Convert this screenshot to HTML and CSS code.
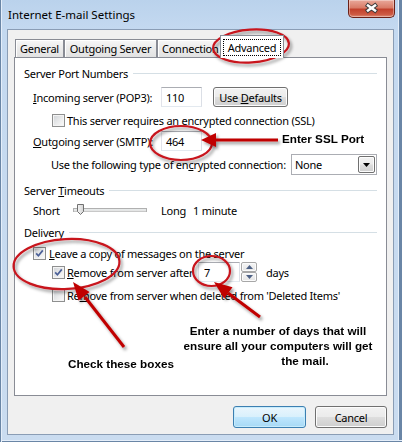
FILE: index.html
```html
<!DOCTYPE html>
<html>
<head>
<meta charset="utf-8">
<title>Internet E-mail Settings</title>
<link rel="stylesheet" href="styles.css">
</head>
<body>
<div class="window">
  <div class="titlebar">
    <span class="title">Internet E-mail Settings</span>
    <div class="close">
      <svg width="47" height="18" viewBox="0 0 47 18">
        <g stroke-linecap="butt">
          <line x1="18" y1="5" x2="29" y2="13" stroke="#3a3a3a" stroke-width="4.6"/>
          <line x1="29" y1="5" x2="18" y2="13" stroke="#3a3a3a" stroke-width="4.6"/>
          <line x1="18.8" y1="5.6" x2="28.2" y2="12.4" stroke="#fff" stroke-width="2.6"/>
          <line x1="28.2" y1="5.6" x2="18.8" y2="12.4" stroke="#fff" stroke-width="2.6"/>
        </g>
      </svg>
    </div>
  </div>

  <div class="client">
    <div class="tabs">
      <div class="tab t-general">General</div>
      <div class="tab t-outgoing">Outgoing Server</div>
      <div class="tab t-connection">Connection</div>
      <div class="tab active"><span class="focus">Advanced</span></div>
    </div>

    <div class="panel">
      <div class="group"><span>Server Port Numbers</span><i class="rule"></i></div>

      <div class="row r-in">
        <span class="lbl"><u>I</u>ncoming server (POP3):</span>
        <span class="field">110</span>
        <span class="btn btn-def"><span>Use <u>D</u>efaults</span></span>
      </div>

      <div class="row r-ssl">
        <span class="cb"></span>
        <span>This server requires an encrypted connection (SSL)</span>
      </div>

      <div class="row r-out">
        <span class="lbl"><u>O</u>utgoing server (SMTP):</span>
        <span class="field">464</span>
      </div>

      <div class="row r-enc">
        <span>Use the following type of en<u>c</u>rypted connection:</span>
        <span class="combo"><span class="combo-val">None</span>
          <span class="combo-btn">
            <svg width="7" height="4" viewBox="0 0 7 4"><polygon points="0,0 7,0 3.5,4" fill="#000"/></svg>
          </span>
        </span>
      </div>

      <div class="group g-mid"><span>Server <u>T</u>imeouts</span><i class="rule"></i></div>

      <div class="row r-slider">
        <span class="s-short">Short</span>
        <svg class="slider" width="74" height="14" viewBox="0 0 74 14">
          <defs>
            <linearGradient id="thumb" x1="0" y1="0" x2="1" y2="0">
              <stop offset="0" stop-color="#f4f4f4"/>
              <stop offset="1" stop-color="#d4d4d4"/>
            </linearGradient>
          </defs>
          <rect x="0.5" y="5.5" width="73" height="3" fill="#e7eaea" stroke="#b0b0b0"/>
          <line x1="1" y1="8" x2="73" y2="8" stroke="#e0e0e0"/>
          <polygon points="4.5,1.5 10.5,1.5 10.5,8.5 7.5,11.5 4.5,8.5" fill="url(#thumb)" stroke="#707070"/>
        </svg>
        <span class="s-long">Long</span>
        <span>1 minute</span>
      </div>

      <div class="group g-mid"><span>Delivery</span><i class="rule"></i></div>

      <div class="row r-leave">
        <span class="cb checked">
          <svg width="11" height="11" viewBox="0 0 11 11"><path d="M2.2 5.4 L4.4 7.8 L8.8 2.4" fill="none" stroke="#4a5f97" stroke-width="1.7"/></svg>
        </span>
        <span><u>L</u>eave a copy of messages on the server</span>
      </div>

      <div class="row r-after">
        <span class="cb checked">
          <svg width="11" height="11" viewBox="0 0 11 11"><path d="M2.2 5.4 L4.4 7.8 L8.8 2.4" fill="none" stroke="#4a5f97" stroke-width="1.7"/></svg>
        </span>
        <span class="after-lbl"><u>R</u>emove from server after</span>
        <span class="field f-days">7</span>
        <span class="spin">
          <span class="spin-btn"><svg width="7" height="4" viewBox="0 0 7 4"><polygon points="0,4 7,4 3.5,0" fill="#4d6185"/></svg></span>
          <span class="spin-btn"><svg width="7" height="4" viewBox="0 0 7 4"><polygon points="0,0 7,0 3.5,4" fill="#4d6185"/></svg></span>
        </span>
        <span class="days">days</span>
      </div>

      <div class="row r-del">
        <span class="cb"></span>
        <span>Re<u>m</u>ove from server when deleted from 'Deleted Items'</span>
      </div>
    </div>

    <div class="buttons">
      <span class="btn btn-ok">OK</span>
      <span class="btn btn-cancel">Cancel</span>
    </div>
  </div>

  <svg class="marks" width="402" height="442" viewBox="0 0 402 442">
    <defs>
      <filter id="sh" x="-30%" y="-30%" width="160%" height="160%">
        <feDropShadow dx="2" dy="2.5" stdDeviation="1.6" flood-color="#000" flood-opacity="0.4"/>
      </filter>
    </defs>
    <g fill="none" stroke="#c8141e" stroke-width="2.2" filter="url(#sh)">
      <ellipse cx="251" cy="46" rx="38" ry="16.5" transform="rotate(-4 251 46)"/>
      <ellipse cx="181" cy="143" rx="31" ry="17"/>
      <ellipse cx="66.5" cy="264" rx="53" ry="25" transform="rotate(-3 66.5 264)"/>
      <ellipse cx="211.5" cy="271" rx="18.5" ry="15"/>
    </g>
    <g filter="url(#sh)">
      <line x1="278" y1="140" x2="214" y2="140" stroke="#c00000" stroke-width="3"/>
      <polygon points="201,140 216,133 216,147" fill="#c00000"/>
      <line x1="124" y1="347" x2="85" y2="297" stroke="#c00000" stroke-width="3"/>
      <polygon points="73,282 89.6,291.9 78.6,300.5" fill="#c00000"/>
      <line x1="260" y1="317" x2="228" y2="293" stroke="#c00000" stroke-width="3"/>
      <polygon points="214,282 232.5,287.3 224.1,298.5" fill="#c00000"/>
    </g>
  </svg>

  <div class="note note-ssl">Enter SSL Port</div>
  <div class="note note-days">
    <div>Enter a number of days that will</div>
    <div>ensure all your computers will get</div>
    <div class="last">the mail.</div>
  </div>
  <div class="note note-check">Check these boxes</div>
</div>
</body>
</html>
```

FILE: styles.css
```css
* { box-sizing: border-box; }
html, body { margin: 0; padding: 0; }
body {
  width: 402px;
  height: 442px;
  overflow: hidden;
  background: #fff;
  font-family: "Noto Sans", "Open Sans", sans-serif;
  font-size: 11px;
  letter-spacing: -0.25px;
  color: #000;
}
u { text-decoration: underline; text-underline-offset: 1px; }

.window {
  position: relative;
  width: 402px;
  height: 442px;
  display: flex;
  flex-direction: column;
  background: linear-gradient(180deg, #bad2ec 0px, #c4d9f0 30px, #cadcf0 100%);
  box-shadow: inset 1px 0 0 #6a86a6, inset 2px 0 0 #e4eefa, inset 0 -1px 0 #6a86a6, inset 0 -2px 0 #e4eefa, inset -3px 0 0 #6a86a6, inset -4px 0 0 #e4eefa;
}

.titlebar {
  height: 29px;
  display: flex;
  align-items: flex-start;
  flex: none;
}
.title {
  font-size: 11.5px;
  letter-spacing: 0;
  line-height: 30px;
  padding-left: 8px;
}
.close {
  margin-left: auto;
  margin-right: 7px;
  width: 47px;
  height: 18px;
  border: 1px solid #6b2118;
  border-top: none;
  border-radius: 0 0 5px 5px;
  background: linear-gradient(180deg, #e9a89a 0%, #d97c68 45%, #c2412c 55%, #cd5a43 85%, #dd8d78 100%);
  box-shadow: inset 0 0 0 1px rgba(255,255,255,0.35);
  display: flex;
}
.close svg { display: block; margin-top: -1px; }

.client {
  margin: 0 8px 0 7px;
  height: 406px;
  border: 1px solid #8a9db5;
  background: #f0f0f0;
  padding: 5px 6px 0 6px;
  display: flex;
  flex-direction: column;
}

.tabs {
  height: 23px;
  margin-bottom: -1px;
  padding-left: 1px;
  display: flex;
  align-items: flex-end;
  flex: none;
}
.tab {
  height: 18px;
  margin-bottom: 1px;
  border: 1px solid #898c95;
  border-bottom: none;
  background: linear-gradient(180deg, #f7f7f7 0%, #ebebeb 50%, #e2e2e2 100%);
  box-shadow: inset 1px 1px 0 #fff;
  display: flex;
  align-items: center;
  justify-content: center;
  line-height: 1;
  white-space: nowrap;
  overflow: hidden;
}
.t-general { width: 49px; }
.t-outgoing { width: 93px; }
.t-connection { width: 65px; justify-content: flex-start; padding-left: 4px; }
.tab.active {
  position: relative;
  z-index: 2;
  width: 64px;
  height: 23px;
  margin: 0 -2px;
  background: #fff;
  box-shadow: none;
}
.focus {
  width: 58px;
  height: 17px;
  margin-top: 1px;
  border: 1px dotted #000;
  display: flex;
  align-items: center;
  justify-content: center;
}

.panel {
  height: 339px;
  flex: none;
  border: 1px solid #898c95;
  background: #fff;
  padding: 8px 9px 0 9px;
}

.group {
  height: 14px;
  display: flex;
  align-items: center;
  white-space: nowrap;
}
.g-mid { margin-top: 8px; }
.rule {
  flex: 1;
  height: 1px;
  margin-left: 5px;
  background: #d5dfe5;
}

.row {
  display: flex;
  align-items: center;
  white-space: nowrap;
}
.r-in { height: 20px; margin-top: 7px; padding-left: 9px; }
.r-ssl { height: 14px; margin-top: 6px; padding-left: 28px; }
.r-out { height: 20px; margin-top: 4px; padding-left: 9px; }
.r-enc { height: 21px; margin-top: 3px; padding-left: 27px; }
.r-slider { height: 14px; margin-top: 6px; padding-left: 9px; }
.r-leave { height: 14px; margin-top: 7px; padding-left: 9px; }
.r-after { height: 20px; margin-top: 2px; padding-left: 28px; }
.r-del { height: 14px; margin-top: 6px; padding-left: 28px; }

.lbl { width: 128px; }

.field {
  width: 41px;
  height: 20px;
  border: 1px solid;
  border-color: #abadb3 #dbdfe6 #e3e9ef #e2e3ea;
  background: #fff;
  padding-left: 4px;
  display: flex;
  align-items: center;
}
.f-days { width: 42px; padding-left: 5px; }

.btn {
  display: flex;
  align-items: center;
  justify-content: center;
  white-space: nowrap;
  border: 1px solid #707070;
  border-radius: 3px;
  background: linear-gradient(180deg, #f2f2f2 0%, #ebebeb 48%, #dddddd 52%, #cfcfcf 100%);
  box-shadow: inset 0 0 0 1px #fcfcfc;
}
.btn-def { width: 75px; height: 20px; margin-left: 11px; }

.cb {
  width: 13px;
  height: 13px;
  flex: none;
  border: 1px solid #8e8f8f;
  background: linear-gradient(135deg, #cfd2d6 0%, #eaebec 55%, #fbfbfb 100%);
  box-shadow: inset 0 0 0 1px #f4f4f4;
  margin-right: 2px;
  display: flex;
  align-items: center;
  justify-content: center;
}
.r-leave .cb { margin-right: 3px; }
.cb svg { display: block; }

.combo {
  margin-left: auto;
  width: 86px;
  height: 21px;
  border: 1px solid #abadb3;
  background: #fff;
  display: flex;
  align-items: center;
  padding-left: 3px;
}
.combo-val { flex: 1; }
.combo-btn {
  width: 17px;
  height: 17px;
  margin-right: 1px;
  border: 1px solid #707070;
  border-radius: 2px;
  background: linear-gradient(180deg, #f2f2f2 0%, #ebebeb 48%, #dddddd 52%, #cfcfcf 100%);
  box-shadow: inset 0 0 0 1px #fcfcfc;
  display: flex;
  align-items: center;
  justify-content: center;
}
.combo-btn svg { display: block; }

.s-short { width: 40px; }
.slider { display: block; flex: none; }
.s-long { width: 32px; margin-left: 14px; }

.after-lbl { width: 131px; }
.spin {
  width: 16px;
  height: 20px;
  margin-left: 1px;
  display: flex;
  flex-direction: column;
}
.spin-btn {
  flex: 1;
  border: 1px solid #a7a7a7;
  border-radius: 2px;
  background: linear-gradient(180deg, #f6f6f6 0%, #e4e4e4 100%);
  box-shadow: inset 0 0 0 1px #fbfbfb;
  display: flex;
  align-items: center;
  justify-content: center;
}
.spin-btn svg { display: block; }
.days { margin-left: 9px; }

.buttons {
  margin-top: 10px;
  height: 22px;
  display: flex;
  justify-content: flex-end;
  gap: 9px;
}
.btn-ok {
  width: 73px;
  border-color: #3c7fb1;
  background: linear-gradient(180deg, #eaf6fd 0%, #d9f0fc 48%, #bee6fd 52%, #a7d9f5 100%);
  box-shadow: inset 0 0 0 1px #c7ecfc;
}
.btn-cancel { width: 72px; }

.marks {
  position: absolute;
  left: 0;
  top: 0;
  pointer-events: none;
}

.note {
  position: absolute;
  font-family: "Liberation Sans", Arial, sans-serif;
  font-weight: bold;
  font-size: 11.7px;
  letter-spacing: 0;
  line-height: 15px;
  color: #000;
  white-space: nowrap;
}
.note-ssl { left: 282px; top: 131px; }
.note-days { left: 183px; top: 323px; width: 190px; text-align: center; }
.note-days .last { padding-left: 54px; }
.note-check { left: 68px; top: 356px; }
```
